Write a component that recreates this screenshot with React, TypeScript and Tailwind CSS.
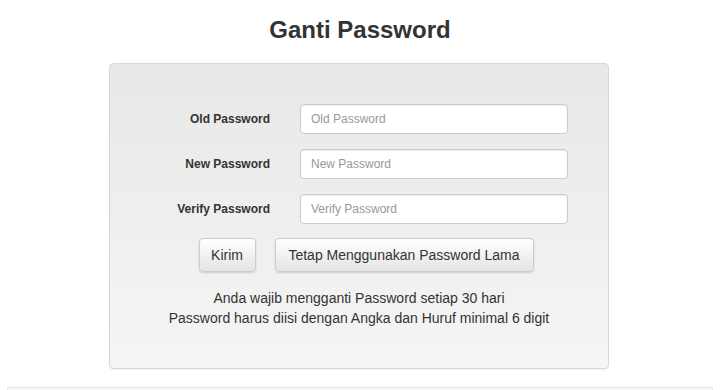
import React from "react";

const font = { fontFamily: '"Liberation Sans", Arial, Helvetica, sans-serif' };

function Row({ label }: { label: string }) {
  return (
    <div className="flex items-center h-[30px]">
      <label className="w-[160px] text-right text-[12px] font-bold text-[#333]">{label}</label>
      <input
        type="password"
        placeholder={label}
        className="ml-[30px] w-[268px] h-[30px] px-[10px] text-[12px] text-[#555] bg-white border border-[#ccc] rounded-[4px] shadow-[inset_0_1px_1px_rgba(0,0,0,0.075)] placeholder:text-[#999] outline-none"
      />
    </div>
  );
}

function Btn({ children, w }: { children: React.ReactNode; w: string }) {
  return (
    <button
      className={`${w} h-[34px] text-[14px] text-[#333] rounded-[4px] border border-[#ccc] bg-gradient-to-b from-white to-[#e4e4e4] shadow-[0_1px_2px_rgba(0,0,0,0.15)]`}
    >
      {children}
    </button>
  );
}

export default function App() {
  return (
    <div className="w-[720px] h-[390px] bg-white overflow-hidden" style={font}>
      <h2 className="pt-[17px] text-center text-[24px] leading-[26px] font-bold text-[#333]">Ganti Password</h2>
      <div className="ml-[109px] mt-[20px] w-[500px] h-[306px] rounded-[4px] border border-[#d8d8d8] bg-gradient-to-b from-[#e8e8e8] to-[#f5f5f5] shadow-[0_1px_1px_rgba(0,0,0,0.05)]">
        <div className="pt-[40px] flex flex-col gap-[15px]">
          <Row label="Old Password" />
          <Row label="New Password" />
          <Row label="Verify Password" />
        </div>
        <div className="mt-[14px] flex justify-center gap-[19px] pl-[14px]">
          <Btn w="w-[57px]">Kirim</Btn>
          <Btn w="w-[259px]">Tetap Menggunakan Password Lama</Btn>
        </div>
        <div className="mt-[16px] text-center text-[14px] leading-[20px] text-[#333]">
          <p>Anda wajib mengganti Password setiap 30 hari</p>
          <p>Password harus diisi dengan Angka dan Huruf minimal 6 digit</p>
        </div>
      </div>
      <div className="mt-[18px] ml-[7px] w-[706px] h-[20px] border-t border-l border-r border-[#e3e3e3] bg-[#f5f5f5]" />
    </div>
  );
}
